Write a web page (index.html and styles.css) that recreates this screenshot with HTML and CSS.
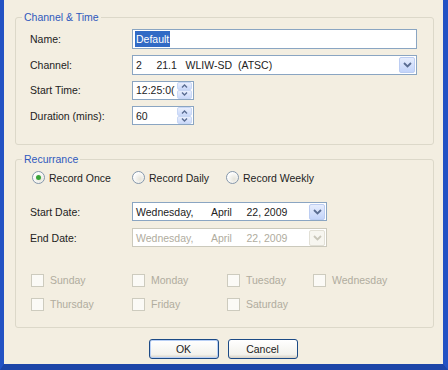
FILE: index.html
```html
<!DOCTYPE html>
<html lang="en">
<head>
    <meta charset="UTF-8">
    <title>Schedule Recording</title>
    <link rel="stylesheet" href="styles.css">
</head>
<body>

<div class="dialog">
    <fieldset class="group group-channel">
        <legend>Channel &amp; Time</legend>
        <div class="form-grid">
            <span class="label">Name:</span>
            <div class="textbox wide"><span class="selected">Default</span></div>

            <span class="label">Channel:</span>
            <div class="combo wide">
                <span class="combo-text">2&nbsp;&nbsp;&nbsp;&nbsp;&nbsp;21.1&nbsp;&nbsp;&nbsp;WLIW-SD&nbsp;&nbsp;(ATSC)</span>
                <span class="drop-btn"><svg width="9" height="6" viewBox="0 0 9 6"><path d="M1 1 L4.5 4.5 L8 1" fill="none" stroke="#5a6d92" stroke-width="1.8"/></svg></span>
            </div>

            <span class="label">Start Time:</span>
            <div class="spinner">
                <span class="spin-text">12:25:0(</span>
                <span class="spin-btns">
                    <span class="spin-btn"><svg width="7" height="4" viewBox="0 0 7 4"><path d="M1 3.5 L3.5 1 L6 3.5" fill="none" stroke="#5a6d92" stroke-width="1.4"/></svg></span>
                    <span class="spin-btn"><svg width="7" height="4" viewBox="0 0 7 4"><path d="M1 0.5 L3.5 3 L6 0.5" fill="none" stroke="#5a6d92" stroke-width="1.4"/></svg></span>
                </span>
            </div>

            <span class="label">Duration (mins):</span>
            <div class="spinner">
                <span class="spin-text">60</span>
                <span class="spin-btns">
                    <span class="spin-btn"><svg width="7" height="4" viewBox="0 0 7 4"><path d="M1 3.5 L3.5 1 L6 3.5" fill="none" stroke="#5a6d92" stroke-width="1.4"/></svg></span>
                    <span class="spin-btn"><svg width="7" height="4" viewBox="0 0 7 4"><path d="M1 0.5 L3.5 3 L6 0.5" fill="none" stroke="#5a6d92" stroke-width="1.4"/></svg></span>
                </span>
            </div>
        </div>
    </fieldset>

    <fieldset class="group group-recur">
        <legend>Recurrance</legend>
        <div class="radio-row">
            <span class="radio-item first"><span class="radio checked"></span>Record Once</span>
            <span class="radio-item second"><span class="radio"></span>Record Daily</span>
            <span class="radio-item"><span class="radio"></span>Record Weekly</span>
        </div>

        <div class="date-grid">
            <span class="label">Start Date:</span>
            <div class="combo date">
                <span class="combo-text">Wednesday,&nbsp;&nbsp;&nbsp;&nbsp;&nbsp;&nbsp;April&nbsp;&nbsp;&nbsp;&nbsp;&nbsp;22, 2009</span>
                <span class="drop-btn"><svg width="9" height="6" viewBox="0 0 9 6"><path d="M1 1 L4.5 4.5 L8 1" fill="none" stroke="#5a6d92" stroke-width="1.8"/></svg></span>
            </div>

            <span class="label">End Date:</span>
            <div class="combo date disabled">
                <span class="combo-text">Wednesday,&nbsp;&nbsp;&nbsp;&nbsp;&nbsp;&nbsp;April&nbsp;&nbsp;&nbsp;&nbsp;&nbsp;22, 2009</span>
                <span class="drop-btn"><svg width="9" height="6" viewBox="0 0 9 6"><path d="M1 1 L4.5 4.5 L8 1" fill="none" stroke="#c9c7ba" stroke-width="1.8"/></svg></span>
            </div>
        </div>

        <div class="days">
            <span class="day"><span class="check"></span>Sunday</span>
            <span class="day"><span class="check"></span>Monday</span>
            <span class="day"><span class="check"></span>Tuesday</span>
            <span class="day"><span class="check"></span>Wednesday</span>
            <span class="day"><span class="check"></span>Thursday</span>
            <span class="day"><span class="check"></span>Friday</span>
            <span class="day"><span class="check"></span>Saturday</span>
        </div>
    </fieldset>

    <div class="buttons">
        <button class="btn default">OK</button>
        <button class="btn">Cancel</button>
    </div>
</div>

</body>
</html>
```

FILE: styles.css
```css
* {
    box-sizing: border-box;
}

body {
    margin: 0;
    font-family: "Liberation Sans", Arial, sans-serif;
    font-size: 10.5px;
    color: #222;
}

.dialog {
    width: 448px;
    height: 370px;
    background: #f3eee1;
    border-left: 4px solid #2352c4;
    border-right: 5px solid #2352c4;
    border-bottom: 6px solid #1d45a8;
    padding: 11px 9px 0 11px;
}

.group {
    margin: 0;
    border: 1px solid #dcd8c9;
    border-radius: 3px;
    padding: 5px 14px 18px 14px;
}

.group legend {
    color: #2f59bd;
    line-height: 13px;
    padding: 0 2px;
    margin-left: -8px;
}

.group-recur {
    margin-top: 8px;
    padding-bottom: 16px;
}

.form-grid {
    display: grid;
    grid-template-columns: 102px auto;
    row-gap: 5.6px;
    align-items: center;
}

.label {
    line-height: 20px;
}

.textbox,
.combo,
.spinner {
    height: 20px;
    background: #fff;
    border: 1px solid #8aa5c2;
    display: flex;
    align-items: center;
}

.wide {
    width: 285px;
}

.textbox {
    padding-left: 2px;
}

.selected {
    background: #316ac5;
    color: #fff;
    padding: 1px 1px;
    line-height: 14px;
}

.combo-text {
    flex: 1;
    padding-left: 3px;
    white-space: nowrap;
}

.drop-btn {
    width: 16px;
    height: 16px;
    margin-right: 1px;
    border: 1px solid #bccdf2;
    border-radius: 2px;
    background: linear-gradient(#e6edfd, #c3d4fa);
    display: flex;
    align-items: center;
    justify-content: center;
}

.spinner {
    width: 62px;
    height: 19px;
}

.spin-text {
    flex: 1;
    padding-left: 3px;
    overflow: hidden;
    white-space: nowrap;
}

.spin-btns {
    display: flex;
    flex-direction: column;
    width: 15px;
    height: 17px;
    margin-right: 1px;
}

.spin-btn {
    flex: 1;
    border: 1px solid #c8d7f5;
    border-radius: 2px;
    background: linear-gradient(#e9effd, #cbd9fa);
    display: flex;
    align-items: center;
    justify-content: center;
}

.radio-row {
    display: flex;
    align-items: center;
    padding-left: 2px;
    height: 14px;
}

.radio-item {
    display: flex;
    align-items: center;
    gap: 4px;
}

.radio-item.first {
    width: 100px;
}

.radio-item.second {
    width: 94px;
}

.radio {
    width: 13px;
    height: 13px;
    border-radius: 50%;
    border: 1px solid #8597ab;
    background: radial-gradient(circle at 65% 65%, #e6e4da, #fff 70%);
    display: flex;
    align-items: center;
    justify-content: center;
}

.radio.checked::after {
    content: "";
    width: 5px;
    height: 5px;
    border-radius: 50%;
    background: #3aa53a;
}

.date-grid {
    display: grid;
    grid-template-columns: 102px auto;
    row-gap: 6px;
    align-items: center;
    margin-top: 17px;
}

.date {
    width: 195px;
    height: 19px;
}

.combo.disabled {
    border-color: #cbc9bc;
    color: #b0ac9e;
}

.combo.disabled .drop-btn {
    border-color: #e2e0d6;
    background: #f7f6f0;
}

.days {
    display: grid;
    grid-template-columns: 101px 95px 86px auto;
    row-gap: 11px;
    margin-top: 26px;
    padding-left: 1px;
}

.day {
    display: flex;
    align-items: center;
    gap: 6px;
    color: #b0ac9e;
    height: 13px;
}

.check {
    width: 13px;
    height: 13px;
    border: 1px solid #cdcbbe;
    background: #fbfaf6;
}

.buttons {
    display: flex;
    justify-content: center;
    gap: 9px;
    margin-top: 11px;
    padding-right: 3px;
}

.btn {
    width: 70px;
    height: 20px;
    font: inherit;
    color: #222;
    border: 1px solid #1c4a85;
    border-radius: 3px;
    background: linear-gradient(#ffffff, #f3f2ec 80%, #d6d0c5);
    padding: 0;
}

.btn.default {
    box-shadow: inset 0 0 0 1px #b8cff5;
}
```
